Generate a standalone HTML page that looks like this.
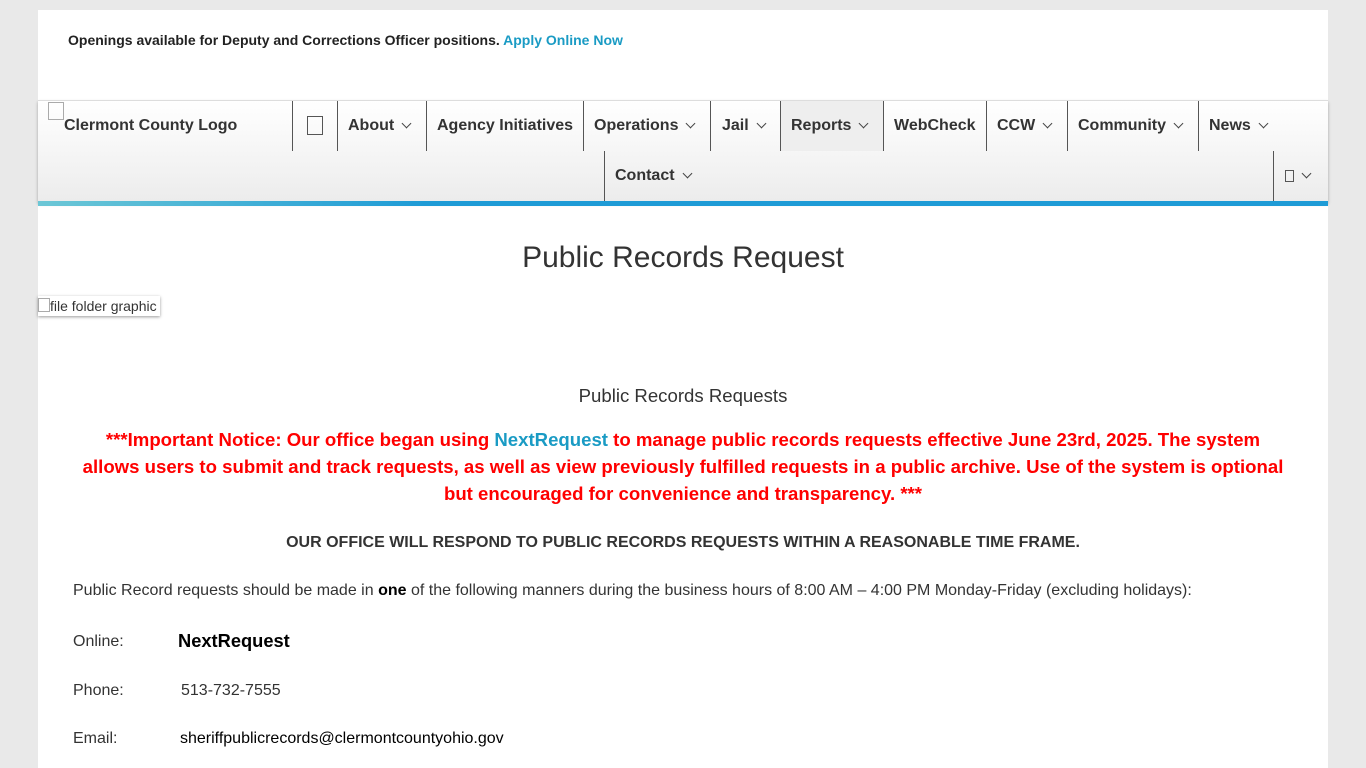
<!DOCTYPE html>
<html><head><meta charset="utf-8"><style>
body{margin:0;background:#e9e9e9;font-family:"Liberation Sans",Arial,sans-serif;}
.wrap{position:absolute;left:38px;top:10px;width:1290px;height:758px;background:#fff;}
.top{position:absolute;left:30px;top:22px;font-size:14px;font-weight:bold;color:#222;}
.top a{color:#1a9bc4;text-decoration:none}
.nav{position:absolute;left:0;top:90px;width:1290px;height:101px;background:linear-gradient(#fff,#ececec);border-top:1px solid #ddd;box-shadow:0 2px 3px rgba(0,0,0,.3);}
.bar{position:absolute;left:0;top:191px;width:1290px;height:5px;background:linear-gradient(90deg,#6cc7d6,#1e9bd6 30%,#1e9bd6);}
.it{position:absolute;font-size:16px;font-weight:bold;color:#333;line-height:50px;height:50px;white-space:nowrap}
.sep{position:absolute;width:1px;height:50px;background:#555}
.chev{display:inline-block;width:6px;height:6px;border-right:1.5px solid #444;border-bottom:1.5px solid #444;transform:rotate(45deg);margin-left:9px;position:relative;top:-3px}
h1{position:absolute;left:0;width:1290px;top:231px;margin:0;text-align:center;font-weight:normal;font-size:30px;color:#333}
.c{position:absolute;left:0;width:1290px;text-align:center}
.row{position:absolute;left:35px;font-size:16px;color:#333}
</style></head><body>
<div class="wrap">
<div class="top">Openings available for Deputy and Corrections Officer positions. <a>Apply Online Now</a></div>
<div class="nav">
<div class="it" style="left:10px;top:0;line-height:20px;height:40px"><span style="display:inline-block;width:14px;height:16px;border:1px solid #aaa;vertical-align:top;margin-top:1px"></span><br><span style="position:relative;left:16px;top:-5px">Clermont County Logo</span></div>
<div class="sep" style="left:254px;top:0"></div>
<div class="it" style="left:269px;top:0"><span style="display:inline-block;width:14px;height:17px;border:1px solid #555;vertical-align:middle"></span></div>
<div class="sep" style="left:299px;top:0"></div>
<div class="it" style="left:310px;top:0">About<span class="chev"></span></div>
<div class="sep" style="left:388px;top:0"></div>
<div class="it" style="left:399px;top:0">Agency Initiatives</div>
<div class="sep" style="left:545px;top:0"></div>
<div class="it" style="left:556px;top:0">Operations<span class="chev"></span></div>
<div class="sep" style="left:672px;top:0"></div>
<div class="it" style="left:742px;top:0;width:103px;background:#eee"></div>
<div class="it" style="left:684px;top:0">Jail<span class="chev"></span></div>
<div class="sep" style="left:742px;top:0"></div>
<div class="it" style="left:753px;top:0">Reports<span class="chev"></span></div>
<div class="sep" style="left:845px;top:0"></div>
<div class="it" style="left:856px;top:0">WebCheck</div>
<div class="sep" style="left:948px;top:0"></div>
<div class="it" style="left:959px;top:0">CCW<span class="chev"></span></div>
<div class="sep" style="left:1029px;top:0"></div>
<div class="it" style="left:1040px;top:0">Community<span class="chev"></span></div>
<div class="sep" style="left:1160px;top:0"></div>
<div class="it" style="left:1171px;top:0">News<span class="chev"></span></div>
<div class="sep" style="left:566px;top:50px"></div>
<div class="it" style="left:577px;top:50px">Contact<span class="chev"></span></div>
<div class="sep" style="left:1235px;top:50px"></div>
<div class="it" style="left:1247px;top:50px"><span style="display:inline-block;width:7px;height:10px;border:1px solid #555;vertical-align:middle"></span><span class="chev"></span></div>
</div>
<div class="bar"></div>
<h1>Public Records Request</h1>
<div style="position:absolute;left:0;top:286px;width:122px;height:20px;box-shadow:0 1px 3px rgba(0,0,0,.4);font-size:14px;color:#333;line-height:20px;white-space:nowrap;overflow:hidden"><span style="display:inline-block;width:10px;height:12px;border:1px solid #aaa;vertical-align:top;margin-top:2px"></span>file folder graphic</div>
<div class="c" style="top:375px;font-size:18.6px;color:#333">Public Records Requests</div>
<div class="c" style="top:416px;font-size:18.6px;font-weight:bold;color:#f00;line-height:27px;left:39px;width:1212px">***Important Notice: Our office began using <span style="color:#1a9bc4">NextRequest</span> to manage public records requests effective June 23rd, 2025. The system allows users to submit and track requests, as well as view previously fulfilled requests in a public archive. Use of the system is optional but encouraged for convenience and transparency. ***</div>
<div class="c" style="top:524px;font-size:16px;font-weight:bold;color:#333">OUR OFFICE WILL RESPOND TO PUBLIC RECORDS REQUESTS WITHIN A REASONABLE TIME FRAME.</div>
<div class="row" style="top:572px">Public Record requests should be made in <b style="color:#000">one</b> of the following manners during the business hours of 8:00 AM – 4:00 PM Monday-Friday (excluding holidays):</div>
<div class="row" style="top:623px">Online:</div><div class="row" style="top:620px;left:140px;font-size:18.3px;font-weight:bold;color:#000">NextRequest</div>
<div class="row" style="top:672px">Phone:</div><div class="row" style="top:672px;left:143px">513-732-7555</div>
<div class="row" style="top:720px">Email:</div><div class="row" style="top:720px;left:142px;color:#000">sheriffpublicrecords@clermontcountyohio.gov</div>
</div>
</body></html>
